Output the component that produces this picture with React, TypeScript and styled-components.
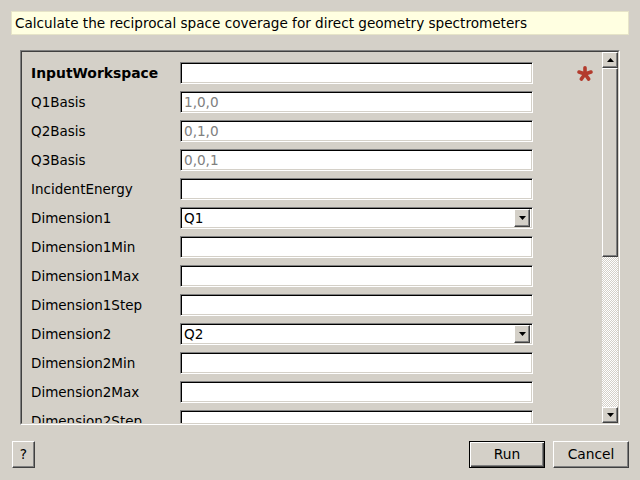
import React from "react";
import styled, { createGlobalStyle } from "styled-components";

const Global = createGlobalStyle`
  html, body { margin: 0; padding: 0; background: #d4d0c8; }
  body { font-family: "DejaVu Sans", sans-serif; font-size: 13.6px; color: #000; }
`;

const Window = styled.div`
  width: 640px;
  height: 480px;
  box-sizing: border-box;
  padding: 11px 11px 0 11px;
  display: flex;
  flex-direction: column;
  overflow: hidden;
`;

const Description = styled.div`
  height: 24px;
  box-sizing: border-box;
  background: #ffffe1;
  border: 1px solid #e6e4c8;
  padding: 0 0 0 3px;
  display: flex;
  align-items: center;
  white-space: nowrap;
`;

const Frame = styled.div`
  margin: 15px 9px 0 9px;
  height: 375px;
  box-sizing: border-box;
  border-style: solid;
  border-width: 1px;
  border-color: #808080 #ffffff #ffffff #808080;
  display: flex;
`;

const FrameInner = styled.div`
  flex: 1;
  display: flex;
  border-style: solid;
  border-width: 1px;
  border-color: #404040 #d4d0c8 #d4d0c8 #404040;
  overflow: hidden;
`;

const Viewport = styled.div`
  flex: 1;
  overflow: hidden;
  padding: 10px 0 0 9px;
`;

const Form = styled.div`
  display: grid;
  grid-template-columns: 149px 353px 1fr;
  grid-auto-rows: 22px;
  row-gap: 7px;
  align-items: center;
`;

const Label = styled.div<{ $bold?: boolean }>`
  font-weight: ${(p) => (p.$bold ? "bold" : "normal")};
  font-size: ${(p) => (p.$bold ? "13.9px" : "13.5px")};
  white-space: nowrap;
`;

const Field = styled.div<{ $muted?: boolean }>`
  height: 22px;
  box-sizing: border-box;
  background: #fff;
  border-style: solid;
  border-width: 1px;
  border-color: #808080 #ffffff #ffffff #808080;
  box-shadow: inset 1px 1px 0 #000, inset -1px -1px 0 #d4d0c8;
  padding: 0 3px;
  display: flex;
  align-items: center;
  color: ${(p) => (p.$muted ? "#808080" : "#000")};
  white-space: nowrap;
`;

const Combo = styled(Field)`
  padding-right: 2px;
  justify-content: space-between;
`;

const Raised = styled.div`
  box-sizing: border-box;
  background: #d4d0c8;
  border-style: solid;
  border-width: 1px;
  border-color: #ffffff #404040 #404040 #ffffff;
  box-shadow: inset -1px -1px 0 #808080;
  display: flex;
  align-items: center;
  justify-content: center;
`;

const DropButton = styled(Raised)`
  width: 16px;
  height: 18px;
`;

const StarCell = styled.div`
  display: flex;
  align-items: center;
  padding: 2px 0 0 42px;
`;

const StarSvg = styled.svg`
  flex: none;
  display: block;
`;

const ScrollBar = styled.div`
  width: 16px;
  display: flex;
  flex-direction: column;
`;

const ScrollButton = styled(Raised)`
  height: 16px;
  flex: none;
`;

const Handle = styled(Raised)`
  height: 189px;
  flex: none;
`;

const Track = styled.div`
  flex: 1;
  background: repeating-conic-gradient(#ffffff 0 25%, #d4d0c8 0 50%) 0 0 / 2px 2px;
`;

const ButtonRow = styled.div`
  margin-top: 16px;
  display: flex;
  align-items: center;
  padding-left: 1px;
`;

const PushButton = styled(Raised)<{ $w: number; $default?: boolean }>`
  width: ${(p) => p.$w}px;
  height: 27px;
  font-size: 13.8px;
  padding-bottom: 1px;
  ${(p) =>
    p.$default
      ? `border-color: #000; box-shadow: inset 1px 1px 0 #fff, inset -1px -1px 0 #404040, inset -2px -2px 0 #808080;`
      : `box-shadow: inset -1px -1px 0 #808080;`}
`;

const Spacer = styled.div`
  flex: 1;
`;

const ButtonGap = styled.div`
  width: 8px;
`;

const Arrow = ({ up }: { up?: boolean }) => (
  <svg width="7" height="4" viewBox="0 0 7 4">
    {up ? <polygon points="0,4 7,4 3.5,0" fill="#000" /> : <polygon points="0,0 7,0 3.5,4" fill="#000" />}
  </svg>
);

const Star = () => (
  <StarSvg width="20" height="20" viewBox="-10 -10 20 20">
    {[0, 72, 144, 216, 288].map((a) => (
      <line
        key={a}
        x1="0"
        y1="0"
        x2={Math.sin((a * Math.PI) / 180) * 6.3}
        y2={-Math.cos((a * Math.PI) / 180) * 6.3}
        stroke="#b33b2d"
        strokeWidth="3.6"
        strokeLinecap="round"
      />
    ))}
  </StarSvg>
);

type Row = { label: string; bold?: boolean; value?: string; muted?: boolean; combo?: boolean; star?: boolean };

const rows: Row[] = [
  { label: "InputWorkspace", bold: true, star: true },
  { label: "Q1Basis", value: "1,0,0", muted: true },
  { label: "Q2Basis", value: "0,1,0", muted: true },
  { label: "Q3Basis", value: "0,0,1", muted: true },
  { label: "IncidentEnergy" },
  { label: "Dimension1", value: "Q1", combo: true },
  { label: "Dimension1Min" },
  { label: "Dimension1Max" },
  { label: "Dimension1Step" },
  { label: "Dimension2", value: "Q2", combo: true },
  { label: "Dimension2Min" },
  { label: "Dimension2Max" },
  { label: "Dimension2Step" },
];

export default function App() {
  return (
    <>
      <Global />
      <Window>
        <Description>Calculate the reciprocal space coverage for direct geometry spectrometers</Description>
        <Frame>
          <FrameInner>
            <Viewport>
              <Form>
                {rows.map((r) => (
                  <React.Fragment key={r.label}>
                    <Label $bold={r.bold}>{r.label}</Label>
                    {r.combo ? (
                      <Combo>
                        <span>{r.value}</span>
                        <DropButton>
                          <Arrow />
                        </DropButton>
                      </Combo>
                    ) : (
                      <Field $muted={r.muted}>{r.value ?? ""}</Field>
                    )}
                    <StarCell>{r.star ? <Star /> : null}</StarCell>
                  </React.Fragment>
                ))}
              </Form>
            </Viewport>
            <ScrollBar>
              <ScrollButton>
                <Arrow up />
              </ScrollButton>
              <Handle />
              <Track />
              <ScrollButton>
                <Arrow />
              </ScrollButton>
            </ScrollBar>
          </FrameInner>
        </Frame>
        <ButtonRow>
          <PushButton $w={23}>?</PushButton>
          <Spacer />
          <PushButton $w={76} $default>Run</PushButton>
          <ButtonGap />
          <PushButton $w={76}>Cancel</PushButton>
        </ButtonRow>
      </Window>
    </>
  );
}
